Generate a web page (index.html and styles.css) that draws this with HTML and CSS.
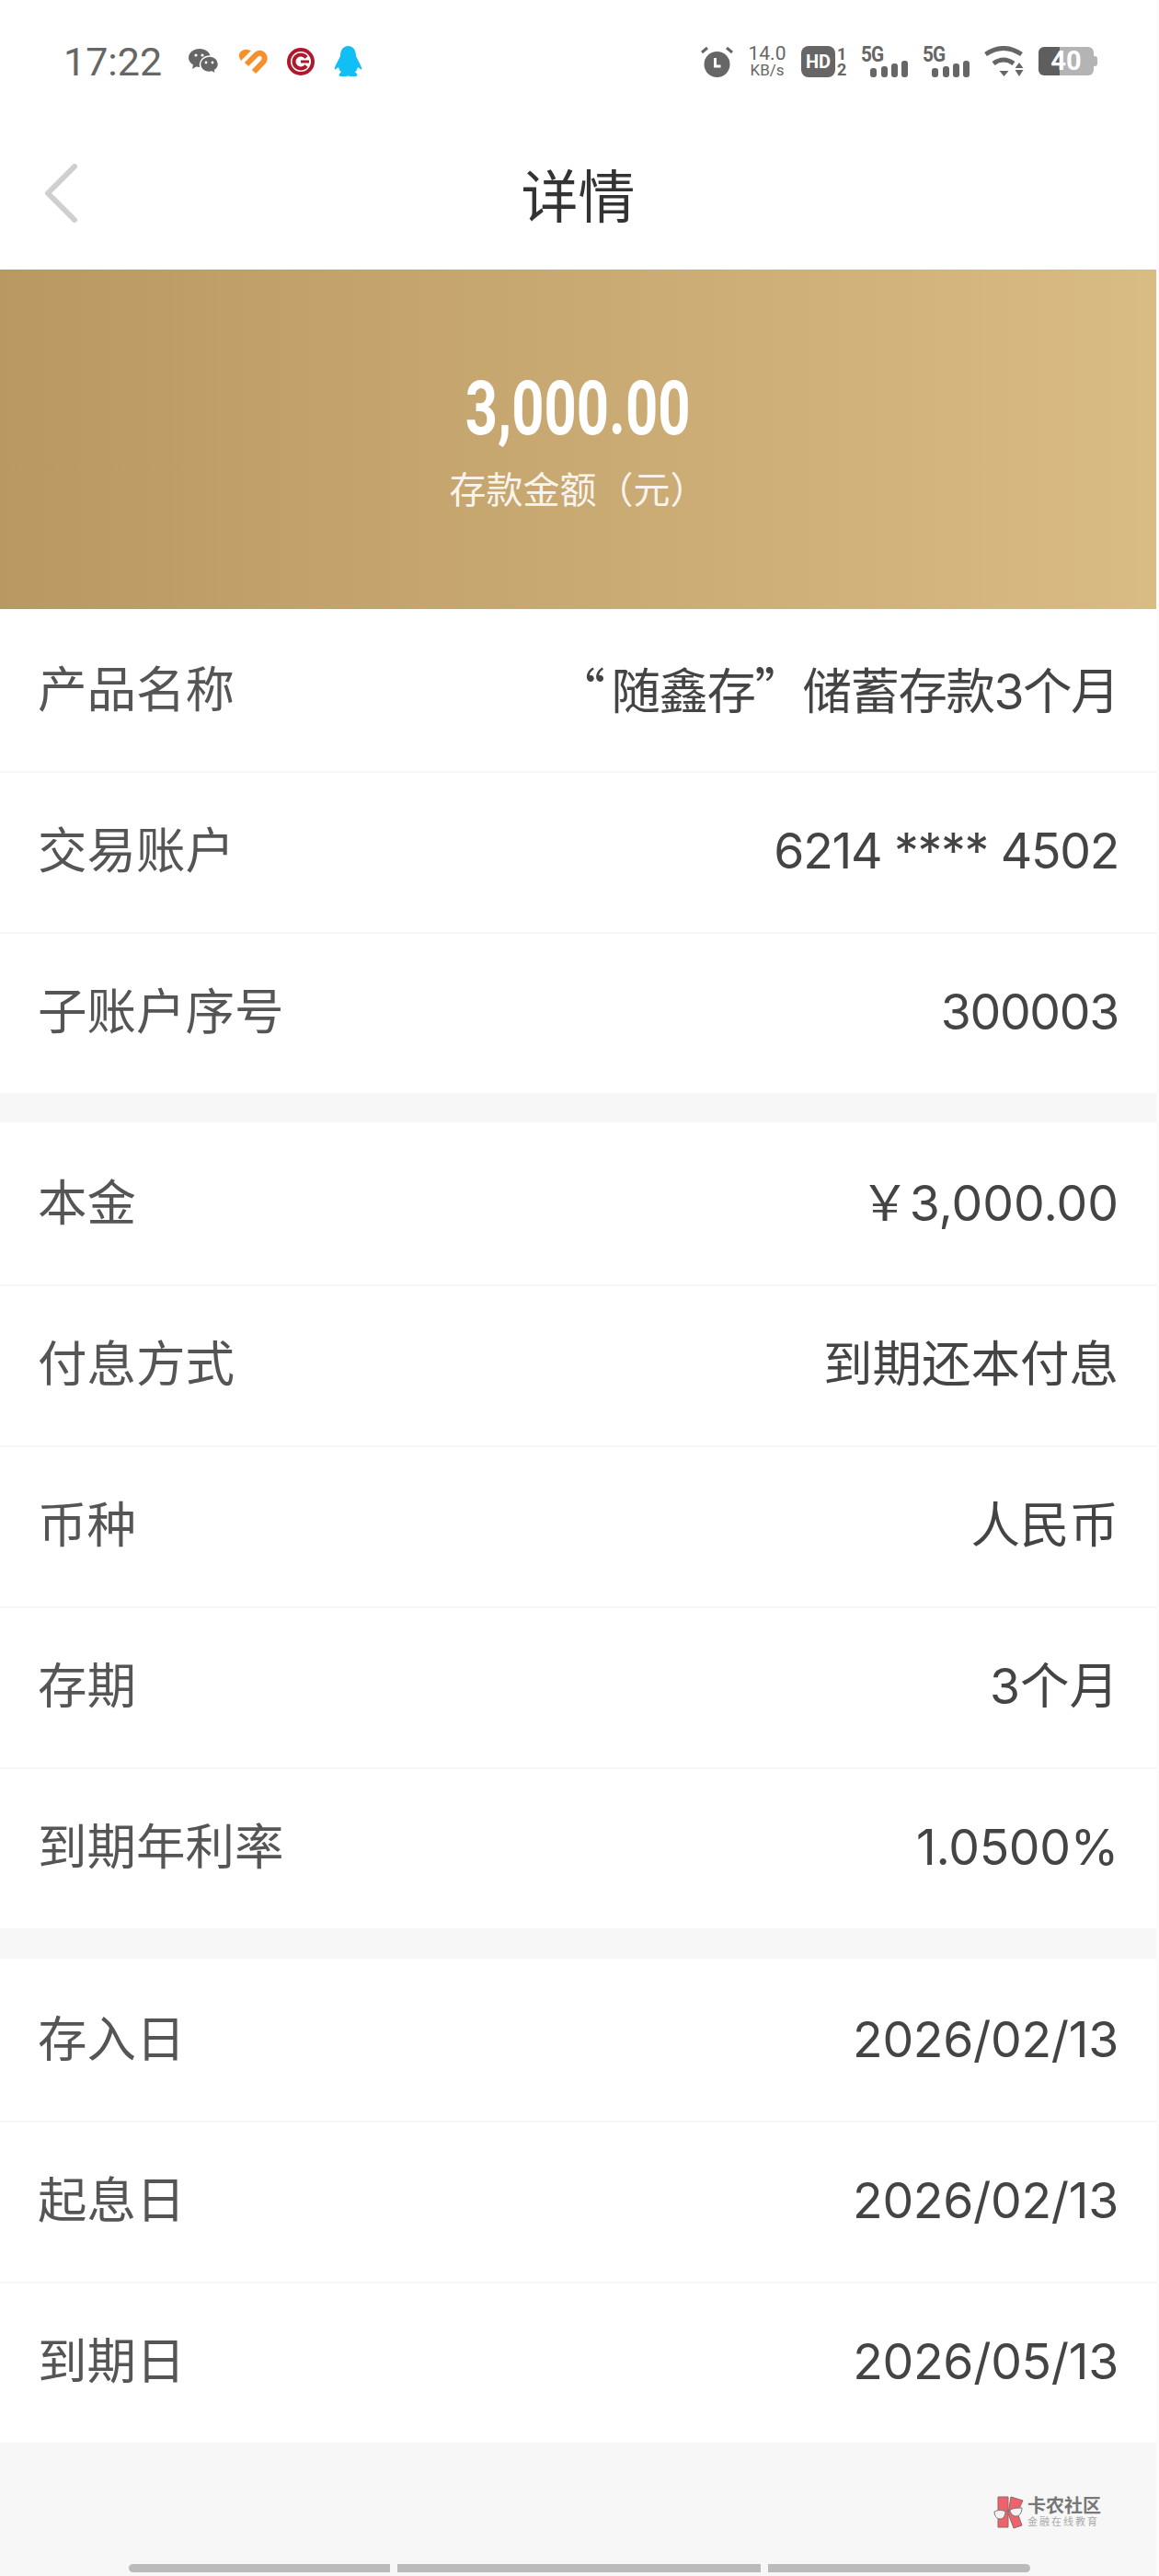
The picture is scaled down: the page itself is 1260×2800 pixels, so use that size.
FILE: index.html
```html
<!DOCTYPE html>
<html lang="zh-CN">
<head>
    <meta charset="utf-8">
    <title>详情</title>
    <link rel="stylesheet" href="styles.css">
</head>
<body>

<div class="page">
    <div class="statusbar">
        <div class="status-left">
            <span class="time">17:22</span>
            <svg class="ic" width="33" height="28" viewBox="0 0 33 28">
                <path fill="#666" d="M12 0c6.6 0 12 4.3 12 10 0 5.600-5.400 10-12 10-1.300 0-2.600-.2-3.800-.5L4 22l1-4.500C2 15.700 0 13 0 10 0 4.300 5.400 0 12 0z"/>
                <path fill="#666" stroke="#fff" stroke-width="1.500" d="M22.500 8C28 8 32.500 11.700 32.500 16.500c0 2.800-1.500 5.200-3.800 6.800l.8 4-4-2.200c-.9.200-1.900.4-3 .4-5.500 0-10-3.700-10-8.500S17 8 22.500 8z"/>
                <circle cx="8" cy="7" r="1.600" fill="#fff"/><circle cx="15" cy="7" r="1.600" fill="#fff"/>
                <circle cx="19" cy="15" r="1.400" fill="#fff"/><circle cx="26" cy="15" r="1.400" fill="#fff"/>
            </svg>
            <svg class="ic" width="32" height="28" viewBox="0 0 32 28">
                <path fill="#f5902a" d="M1 9C0 4 5 0 10 1l4 1L3 13z"/>
                <path fill="none" stroke="#f5902a" stroke-width="6" d="M9 17L20 6c5-4 11 2 7.500 8L17 25"/>
            </svg>
            <svg class="ic" width="30" height="30" viewBox="0 0 30 30">
                <circle cx="15" cy="15" r="15" fill="#ad1a2d"/>
                <circle cx="15" cy="15" r="11" fill="#fff"/>
                <path fill="none" stroke="#ad1a2d" stroke-width="4" d="M21 10.500A7.500 7.500 0 1 0 21 19.500"/>
                <path stroke="#ad1a2d" stroke-width="3" d="M15 15h9"/>
            </svg>
            <svg class="ic" width="31" height="33" viewBox="0 0 31 33">
                <path fill="#12bff5" d="M15.500 0C9.500 0 7 5 7 11c-2 4-5 9-6.500 14 .5 1 2 0 4.500-2 .5 2 1.500 4 3 5.500-1.500 1-2.500 2-2.500 3.500 0 1 4 1 7 1 1 0 2-.5 3-.5s2 .5 3 .5c3 0 7 0 7-1 0-1.500-1-2.500-2.500-3.500 1.500-1.500 2.500-3.500 3-5.500 2.500 2 4 3 4.500 2C29 20 26 15 24 11c0-6-2.500-11-8.500-11z"/>
            </svg>
        </div>
        <div class="status-right">
            <svg class="ic" width="35" height="34" viewBox="0 0 35 34">
                <circle cx="17.500" cy="20" r="14" fill="#666"/>
                <path fill="none" stroke="#fff" stroke-width="3" d="M15.500 13v9h6"/>
                <path stroke="#666" stroke-width="3" d="M1 7l6-5M34 7l-6-5"/>
            </svg>
            <div class="speed">
                <span class="speed-num">14.0</span>
                <span class="speed-unit">KB/s</span>
            </div>
            <div class="hd">
                <span class="hd-box">HD</span>
                <span class="hd-nums"><span>1</span><span>2</span></span>
            </div>
            <div class="net">
                <span class="net-text">5G</span>
                <svg class="net-bars" width="42" height="18" viewBox="0 0 42 18">
                    <rect x="0" y="8" width="7" height="10" rx="3" fill="#666"/>
                    <rect x="12" y="6" width="7" height="12" rx="3" fill="#666"/>
                    <rect x="23" y="3" width="7" height="15" rx="3" fill="#666"/>
                    <rect x="34" y="0" width="7" height="18" rx="3" fill="#666"/>
                </svg>
            </div>
            <div class="net">
                <span class="net-text">5G</span>
                <svg class="net-bars" width="42" height="18" viewBox="0 0 42 18">
                    <rect x="0" y="8" width="7" height="10" rx="3" fill="#666"/>
                    <rect x="12" y="6" width="7" height="12" rx="3" fill="#666"/>
                    <rect x="23" y="3" width="7" height="15" rx="3" fill="#666"/>
                    <rect x="34" y="0" width="7" height="18" rx="3" fill="#666"/>
                </svg>
            </div>
            <svg class="ic" width="44" height="34" viewBox="0 0 44 34">
                <path fill="none" stroke="#666" stroke-width="5" d="M1.500 9Q21 -4 40.500 9"/>
                <path fill="none" stroke="#666" stroke-width="5" d="M10 19Q21 11 32 19"/>
                <path fill="#666" d="M16.500 27h10L21.500 33z"/>
                <path fill="#666" d="M33.500 24l4.500-6 4.500 6zM33.500 26h9L38 33z"/>
            </svg>
            <div class="battery">40</div>
        </div>
    </div>

    <div class="nav">
        <svg class="back" width="37" height="64" viewBox="0 0 37 64">
            <path fill="none" stroke="#cfcfcf" stroke-width="6" stroke-linecap="round" stroke-linejoin="round" d="M33 3L4 32l29 29"/>
        </svg>
        <h1 class="nav-title">详情</h1>
        <span></span>
    </div>

    <div class="banner">
        <div class="amount">3,000.00</div>
        <div class="amount-label">存款金额（元）</div>
    </div>

    <div class="group">
        <div class="row"><span>产品名称</span><span class="val val-tight"><span class="quote quote-open">“</span>随鑫存<span class="quote">”</span>储蓄存款3个月</span></div>
        <div class="row"><span>交易账户</span><span class="val num-tight">6214 **** 4502</span></div>
        <div class="row"><span>子账户序号</span><span class="val num-tight">300003</span></div>
    </div>

    <div class="group group-mid">
        <div class="row"><span>本金</span><span class="val">￥3,000.00</span></div>
        <div class="row"><span>付息方式</span><span class="val">到期还本付息</span></div>
        <div class="row"><span>币种</span><span class="val">人民币</span></div>
        <div class="row"><span>存期</span><span class="val">3个月</span></div>
        <div class="row"><span>到期年利率</span><span class="val num">1.0500%</span></div>
    </div>

    <div class="group">
        <div class="row"><span>存入日</span><span class="val num">2026/02/13</span></div>
        <div class="row"><span>起息日</span><span class="val num">2026/02/13</span></div>
        <div class="row"><span>到期日</span><span class="val num">2026/05/13</span></div>
    </div>

    <div class="footer">
        <div class="logo">
            <svg width="34" height="36" viewBox="0 0 34 36">
                <path fill="#ef626b" stroke="#8a6a6a" stroke-width="1" d="M6 1h11v33H6z"/>
                <path fill="#ef626b" stroke="#8a6a6a" stroke-width="1" d="M20 1l13 4-6 13 5 14-9 3-6-16z"/>
                <path fill="#f4f1ee" stroke="#777" stroke-width="1" d="M2 17c4-2 9-2 12 0 0 4-2 8-6 8s-6-4-6-8zM19 15c4-2 9-2 13-2 0 4-2 9-6 9s-7-3-7-7z"/>
                <path fill="none" stroke="#777" stroke-width="1" d="M14 17l5-2"/>
            </svg>
            <div class="logo-text">
                <span class="logo-name">卡农社区</span>
                <span class="logo-sub">金融在线教育</span>
            </div>
        </div>
        <div class="homebar">
            <span class="seg seg-a"></span>
            <span class="seg seg-b"></span>
            <span class="seg seg-c"></span>
        </div>
    </div>
</div>

</body>
</html>
```
FILE: styles.css
```css
body {
    margin: 0;
    background-color: #fbfbfb;
    font-family: "Roboto", "Noto Sans CJK SC", sans-serif;
}

.page {
    width: 1257px;
    height: 2800px;
    display: flex;
    flex-direction: column;
    background-color: #fff;
}

/* status bar */
.statusbar {
    height: 133px;
    padding: 0 65px 0 69px;
    display: flex;
    justify-content: space-between;
    align-items: center;
    color: #666;
}

.status-left,
.status-right {
    display: flex;
    align-items: center;
}

.status-left {
    gap: 21px;
}

.status-right {
    gap: 15px;
}

.ic {
    display: block;
}

.time {
    font-size: 43px;
    width: 115px;
}

.speed {
    display: flex;
    flex-direction: column;
    align-items: center;
    width: 44px;
}

.speed-num {
    font-size: 21px;
    line-height: 19px;
}

.speed-unit {
    font-size: 17px;
    line-height: 16px;
}

.hd {
    display: flex;
    align-items: center;
    gap: 2px;
    width: 50px;
}

.hd-box {
    width: 37px;
    height: 34px;
    line-height: 34px;
    border-radius: 8px;
    background-color: #666;
    color: #fff;
    font-size: 20px;
    font-weight: bold;
    text-align: center;
}

.hd-nums {
    display: flex;
    flex-direction: column;
    font-size: 18px;
    line-height: 17px;
    font-weight: bold;
    align-items: center;
}

.net {
    position: relative;
    width: 52px;
    height: 34px;
}

.net-text {
    display: block;
    font-size: 23px;
    line-height: 20px;
    font-weight: bold;
    letter-spacing: -1px;
    transform: scaleX(0.9);
    transform-origin: left;
}

.net-bars {
    position: absolute;
    right: 0;
    bottom: 0;
}

.battery {
    position: relative;
    width: 60px;
    height: 31px;
    line-height: 31px;
    margin-right: 3px;
    border-radius: 6px;
    background: linear-gradient(to right, #5e5e5e 0, #5e5e5e 39%, #b4b4b4 39%, #b4b4b4 100%);
    color: #fff;
    font-size: 29px;
    font-weight: bold;
    text-align: center;
}

.battery::after {
    content: "";
    position: absolute;
    right: -4px;
    top: 10px;
    width: 4px;
    height: 11px;
    border-radius: 0 3px 3px 0;
    background-color: #b4b4b4;
}

/* nav */
.nav {
    height: 153px;
    padding: 0 48px 7px;
    display: grid;
    grid-template-columns: 1fr auto 1fr;
    align-items: center;
}

.back {
    display: block;
}

.nav-title {
    margin: 0;
    font-size: 62px;
    font-weight: 400;
    color: #333;
}

/* banner */
.banner {
    height: 369px;
    display: flex;
    flex-direction: column;
    align-items: center;
    background: linear-gradient(to right, #ba9862, #d9bb84);
    color: #fff;
}

.amount {
    margin-top: 111px;
    font-size: 82px;
    line-height: 80px;
    font-weight: bold;
    transform: scaleX(0.75);
}

.amount-label {
    margin-top: 23px;
    font-size: 40px;
    line-height: 54px;
    color: rgba(255, 255, 255, 0.9);
}

/* rows */
.group {
    padding-top: 3px;
    border-bottom: 32px solid #f7f7f7;
}

.group-mid {
    border-bottom-width: 33px;
}

.group:last-of-type {
    border-bottom: none;
}

.row {
    height: 170px;
    padding: 0 41px 3px;
    display: flex;
    justify-content: space-between;
    align-items: center;
    border-bottom: 2px solid #f6f6f6;
    font-family: "Inter", "Noto Sans CJK SC", sans-serif;
    font-size: 53.5px;
    line-height: 70px;
    color: #555;
}

.row:last-child {
    border-bottom: none;
}

.val {
    color: #444;
}

.val-tight {
    letter-spacing: -1.5px;
}

.num {
    letter-spacing: -0.3px;
}

.num-tight {
    letter-spacing: -1.3px;
}

.quote {
    font-family: "Noto Sans CJK SC", sans-serif;
}

.quote-open {
    margin-right: 8px;
}

/* footer */
.footer {
    flex: 1;
    background-color: #f7f7f7;
    display: flex;
    flex-direction: column;
    justify-content: flex-end;
}

.logo {
    align-self: flex-end;
    margin-right: 60px;
    margin-bottom: 38px;
    display: flex;
    align-items: center;
    gap: 4px;
}

.logo-text {
    display: flex;
    flex-direction: column;
}

.logo-name {
    font-size: 20px;
    line-height: 21px;
    font-weight: bold;
    color: #777;
}

.logo-sub {
    font-size: 11px;
    line-height: 14px;
    letter-spacing: 2px;
    color: #aaa;
}

.homebar {
    display: flex;
    gap: 8px;
    padding-left: 140px;
    margin-bottom: 4px;
}

.seg {
    height: 9px;
    background-color: #bbb;
}

.seg-a {
    width: 284px;
    border-radius: 5px 0 0 5px;
}

.seg-b {
    width: 395px;
}

.seg-c {
    width: 285px;
    border-radius: 0 5px 5px 0;
}
```
